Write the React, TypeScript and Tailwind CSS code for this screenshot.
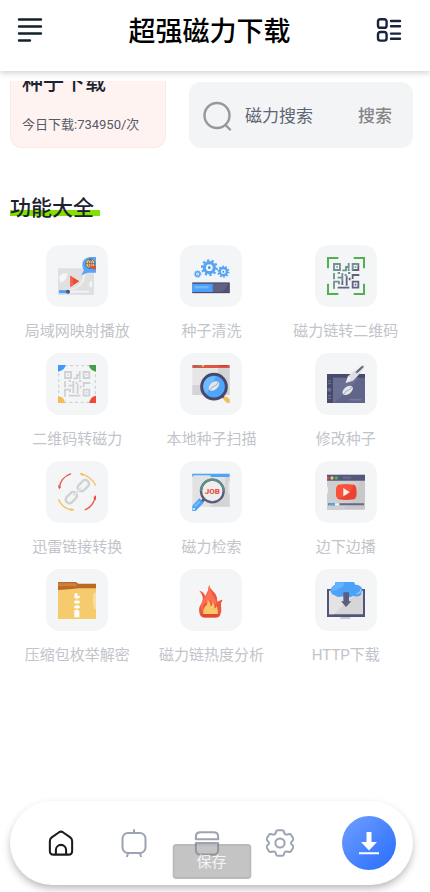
import type { ReactNode } from "react";

const FONT = "font-[family-name:Roboto,'Noto_Sans_CJK_SC',sans-serif]";

function Art({ children }: { children: ReactNode }) {
  return (
    <svg viewBox="0 0 114 114" className="h-[38px] w-[38px]" aria-hidden="true">
      {children}
    </svg>
  );
}

function Gear({ x, y, r, fill }: { x: number; y: number; r: number; fill: string }) {
  return (
    <g>
      <circle cx={x} cy={y} r={r * 0.9} fill={fill} />
      <circle
        cx={x}
        cy={y}
        r={r}
        fill="none"
        stroke={fill}
        strokeWidth={r * 0.3}
        pathLength={20}
        strokeDasharray="1 1"
      />
      <circle cx={x} cy={y} r={r * 0.46} fill="#f3f5f7" />
      <circle cx={x} cy={y} r={r * 0.18} fill="#4b86c9" />
    </g>
  );
}

function QrModules({ color }: { color: string }) {
  return (
    <g fill="none" stroke={color} strokeWidth="5.5">
      <path d="M21 21h18v18H21zM77 21h17v18H77zM77 74h17v18H77z" />
      <path d="M28 30h5M83 30h5M83 83h5" strokeWidth="5" />
      <path d="M65 18v12h-8v10H46M65 34v8" />
      <path d="M21 48v19M32 48h7M32 62h14M46 48v36M59 56v30M53 54h6M21 95V74h17M36 74v8M32 92h35" />
      <path d="M63 48h7M77 66V54h20M68 62v8" />
    </g>
  );
}

function Seed({ x, y }: { x: number; y: number }) {
  return (
    <g transform={`translate(${x} ${y}) rotate(-38)`}>
      <ellipse rx="18" ry="11" fill="#e4e6e9" />
      <path d="M-16 2Q-7-3 2 1T16-2" fill="none" stroke="#8d96a9" strokeWidth="2" />
    </g>
  );
}

function LanArt() {
  return (
    <Art>
      <path d="M0 34h108v80H0z" fill="#e1e0e0" />
      <path d="M4 62q0-12 24-14-2 24-18 28-6-2-6-14zM94 80q2-8 8-8v18q-8 2-8-10z" fill="#f6f6f6" />
      <path d="M26 98Q72 94 76 48h8q-2 40-42 52z" fill="#eeeeee" />
      <path d="M37 56v34l27-17z" fill="#e94b35" />
      <path d="M37 56v34l8-5V61z" fill="#f5634c" />
      <path d="M34 104h59" stroke="#f4f4f4" strokeWidth="5" />
      <path d="M3 104h26" stroke="#4ba0f5" strokeWidth="9" />
      <circle cx="30" cy="104" r="6" fill="#505478" />
      <path d="M114 0H96Q73 3 73 24q0 8 5 15l-8 16 19-8h25z" fill="#56a7fb" />
      <circle cx="97" cy="20" r="14" fill="#f7cd7b" stroke="#604f54" strokeWidth="2.5" />
      <path d="M97 6v28M83 20h28M97 6q-13 14 0 28M97 6q13 14 0 28" fill="none" stroke="#604f54" strokeWidth="2" />
      <path d="M99 27h15v9l-8 2z" fill="#e94b35" />
    </Art>
  );
}

function CleanArt() {
  return (
    <Art>
      <Gear x={52} y={32} r={22} fill="#54a4f7" />
      <Gear x={17} y={51} r={10} fill="#54a4f7" />
      <Gear x={94} y={44} r={16} fill="#54a4f7" />
      <path d="M1 77h112v31H1z" fill="#606282" />
      <path d="M113 80v25H84q18-3 22-25z" fill="#50526f" />
      <path d="M1 80h61v25H1z" fill="#4da1fb" />
      <path d="M8 87h42v7H8z" fill="#72b9fc" />
      <path d="M1 78h112M1 107h112" stroke="#454767" strokeWidth="3" />
    </Art>
  );
}

function ToQrArt() {
  return (
    <Art>
      <defs>
        <linearGradient id="qr-ink" gradientUnits="userSpaceOnUse" x1="20" y1="20" x2="95" y2="95">
          <stop offset=".5" stopColor="#71928e" />
          <stop offset=".54" stopColor="#61637f" />
        </linearGradient>
      </defs>
      <path
        d="M3 34V3h31M80 3h31v31M111 80v31H80M34 111H3V80"
        fill="none"
        stroke="#4fb24b"
        strokeWidth="6"
      />
      <QrModules color="url(#qr-ink)" />
    </Art>
  );
}

function FromQrArt() {
  return (
    <Art>
      <path d="M2 2h110v110H2z" fill="none" stroke="#d3d4d5" strokeWidth="4" strokeDasharray="9 8" />
      <path d="M0 0h23Q19 17 0 20z" fill="#3f99f6" />
      <path d="M114 0H93q3 17 21 20z" fill="#43a047" />
      <path d="M0 114V94q19 1 21 20z" fill="#f4bb57" />
      <path d="M114 114V92q-17 3-21 22z" fill="#ef4935" />
      <QrModules color="#d1d1d1" />
    </Art>
  );
}

function ScanArt() {
  return (
    <Art>
      <path d="M1 0h112v90H1z" fill="#e7e6e6" />
      <path d="M78 9h35v81H1V60h20Q80 60 78 9z" fill="#d5d3d4" />
      <path d="M1 0h112v9H1z" fill="#df5543" />
      <path d="M82 1h24v3H82z" fill="#b53b35" />
      <circle cx="12" cy="1" r="4" fill="#5876a8" />
      <circle cx="22" cy="1" r="4" fill="#54a154" />
      <circle cx="33" cy="1" r="4" fill="#f9cc65" />
      <path d="M87 90l8 8" stroke="#53556f" strokeWidth="8" />
      <path d="M93 102q4-10 11-7l9 8v11h-8z" fill="#f6bd57" />
      <circle cx="66" cy="65" r="37" fill="#50a5f8" stroke="#46496c" strokeWidth="9" />
      <path d="M66 34q-29 0-32 30 1 13 10 22L72 35z" fill="#6fbaff" />
      <Seed x={66} y={63} />
    </Art>
  );
}

function EditArt() {
  return (
    <Art>
      <path d="M0 27h114v87H0z" fill="#62658a" />
      <path d="M0 27h114v11H18v76H0z" fill="#484b6c" />
      <path d="M18 38h80l-76 76h-4z" fill="#6c6f94" />
      <path d="M3 48h9M3 56h9M3 92h9M3 100h9" stroke="#777a9b" strokeWidth="3" />
      <circle cx="7" cy="74" r="6" fill="#6c6f91" />
      <path d="M68 104h35" stroke="#777a9e" strokeWidth="5" />
      <path d="M56 54l7-20q16-17 48-34l3 4Q95 33 77 48z" fill="#dedfe2" />
      <path d="M56 54l8-18 8 4z" fill="#f7f7f7" />
      <path d="M87 24L108 4" stroke="#626681" strokeWidth="6" />
      <path d="M87 22l5 5" stroke="#d8dae0" strokeWidth="3" />
      <Seed x={62} y={76} />
    </Art>
  );
}

function ConvertArt() {
  return (
    <Art>
      <g fill="none" strokeWidth="4">
        <path d="M39 2Q7 14 4 45" stroke="#ee5845" />
        <path d="M66 2q33 7 47 36" stroke="#f7c160" />
        <path d="M112 68q-3 31-32 43" stroke="#ee5845" />
        <path d="M1 78q12 29 43 34" stroke="#f7c160" />
      </g>
      <path d="M0 35l3 14 6-6zM114 68l-8 6 8 8z" fill="#e74c37" />
      <path d="M65 1l12 2-2 7zM50 112l-10-7-4 7z" fill="#f6b94f" />
      <g fill="none" stroke="#d0d1d3" strokeWidth="7">
        <rect x="-19" y="-11" width="38" height="22" rx="10" transform="translate(76 38) rotate(-45)" />
        <rect x="-19" y="-11" width="38" height="22" rx="10" transform="translate(40 74) rotate(-45)" />
      </g>
      <path d="M48 66l20-20" stroke="#e4e4e5" strokeWidth="7" strokeLinecap="round" />
    </Art>
  );
}

function SearchJobArt() {
  return (
    <Art>
      <path d="M1 2h112v99H1z" fill="#e3e2e2" />
      <path d="M113 24q-9 6-4 38h4v39H50q49-15 50-89h13z" fill="#d5d4d5" />
      <path d="M1 2h112v10H58l-5-5H6l-5 6z" fill="#4ea3fa" />
      <path d="M37 78l-9 9" stroke="#545a78" strokeWidth="9" />
      <path d="M1 98l21-22 13 13-24 25H1z" fill="#4ba1f6" />
      <path d="M8 101l15-15" stroke="#7fc1ff" strokeWidth="5" />
      <circle cx="6" cy="108" r="3" fill="#f5f9ff" />
      <circle cx="61" cy="54" r="34" fill="#efeeee" stroke="#5a5c7c" strokeWidth="7" />
      <path d="M27 54a34 34 0 0 1 68 0" fill="none" stroke="#628c89" strokeWidth="7" />
      <text x="61" y="63" textAnchor="middle" fontSize="24" fontWeight="900" fill="#ed5142">
        JOB
      </text>
    </Art>
  );
}

function PlayerArt() {
  return (
    <Art>
      <path d="M0 5h114v105H0z" fill="#c9c8c8" />
      <path d="M0 23h97q-5 58-53 87H0z" fill="#d0cfcf" />
      <path d="M0 5h114v18H0z" fill="#55587a" />
      <path d="M48 14h25" stroke="#6b6e90" strokeWidth="6" />
      <circle cx="1" cy="15" r="5" fill="#ef4e38" />
      <circle cx="15" cy="15" r="5" fill="#f5c46a" />
      <circle cx="28" cy="15" r="5" fill="#57ae51" />
      <path d="M0 38q7 14 0 25z" fill="#f0f0f0" />
      <path d="M35 35q23-3 46 0 8 2 8 22t-8 22q-23 4-46 0-8-2-8-22t8-22z" fill="#e94333" />
      <path d="M35 36q22-3 43 0-5 34-46 40-5-3-5-19t8-21z" fill="#fc503a" />
      <path d="M49 45v25l19-12z" fill="#f5f5f5" />
      <path d="M3 94h108" stroke="#65688a" strokeWidth="6" />
      <path d="M5 94h22" stroke="#55a7f9" strokeWidth="6" />
      <path d="M24 94h13" stroke="#f6f6f6" strokeWidth="7" />
    </Art>
  );
}

function ZipArt() {
  return (
    <Art>
      <path d="M0 3h54l7 5h53v22H0z" fill="#bc6926" />
      <path d="M2 11h50" stroke="#cc823e" strokeWidth="9" strokeLinecap="round" />
      <path d="M0 27q50-3 62-5h52v92H0z" fill="#f6cb6e" />
      <path d="M114 35h-5q-4 3-4 22t4 27h5z" fill="#fbdda0" />
      <path
        d="M50 37h8v7h7v8h-7v7h7v8h-7v7h7v8h-7v4l6 4v19H49V87h7v-5h-7v-8h7v-7h-7v-8h7v-7h-7z"
        fill="#fff"
      />
    </Art>
  );
}

function HeatArt() {
  return (
    <Art>
      <path
        d="M52 8q-2 10 8 19 12 11 15 23-1 8 2 12 5-5 15-6-6 8-5 19 3 18-3 28-2 7-13 7H39q-13 0-16-12-5-13 2-25 9-11 7-25-2-10-10-19 14 4 18 17 11-18 12-38z"
        fill="#ee5841"
      />
      <path d="M51 12q-3 31-15 40-10 14-9 27 1 11 8 14-8-16 6-30 7 6 14-7 3 12 10 16 4-7 9-2-2-14-10-26Q55 32 51 12z" fill="#ff6f54" />
      <path d="M34 100q-2-19 10-27 3-5 3-17 9 8 9 21 6-5 6-14 7 8 6 20 5-3 6-9 5 18 3 26z" fill="#f8c868" />
      <path d="M28 99h55q-1 9-10 9H37q-8 0-9-9z" fill="#e64734" />
    </Art>
  );
}

function HttpArt() {
  return (
    <Art>
      <path d="M0 24h114v84H0z" fill="#50567a" />
      <path d="M6 29h102v71H6z" fill="#d6d5d7" />
      <path d="M6 29h90L20 100H6z" fill="#e4e3e4" />
      <path d="M42 108h28v6H39z" fill="#c9c9c9" />
      <path
        d="M25 3h54q5 2 6 8 15 0 21 12 0 9-3 11 1 11-11 12-8 1-13-2-18 10-32 2-15 5-24-3-13-4-12-16 0-9 13-16z"
        fill="#4ba2f6"
      />
      <path d="M28 4h25q-1 15-18 19-9 8-23 7-1-10 12-16z" fill="#63b3ff" />
      <path d="M88 38q13 0 14-14" fill="none" stroke="#91cbff" strokeWidth="4" />
      <path d="M49 34h17v27h7L57 78 42 61h7z" fill="#5a5e80" />
    </Art>
  );
}

const tools = [
  { label: "局域网映射播放", art: <LanArt /> },
  { label: "种子清洗", art: <CleanArt /> },
  { label: "磁力链转二维码", art: <ToQrArt /> },
  { label: "二维码转磁力", art: <FromQrArt /> },
  { label: "本地种子扫描", art: <ScanArt /> },
  { label: "修改种子", art: <EditArt /> },
  { label: "迅雷链接转换", art: <ConvertArt /> },
  { label: "磁力检索", art: <SearchJobArt /> },
  { label: "边下边播", art: <PlayerArt /> },
  { label: "压缩包枚举解密", art: <ZipArt /> },
  { label: "磁力链热度分析", art: <HeatArt /> },
  { label: "HTTP下载", art: <HttpArt /> },
];

function Header() {
  return (
    <header className="flex h-[71px] items-start justify-between bg-white pt-4 pr-[27px] pl-4 shadow-[0_2px_6px_rgba(0,0,0,0.18)]">
      <button type="button" aria-label="菜单" className="text-[#13212a]">
        <svg viewBox="0 0 28 28" className="h-7 w-7" fill="none" stroke="currentColor" strokeWidth="2.4" strokeLinecap="round">
          <path d="M3 3.5h22M3 10.5h22M3 17.5h22M3 24.5h11" />
        </svg>
      </button>
      <h1 className="text-[27px] leading-8 font-medium text-black">超强磁力下载</h1>
      <button type="button" aria-label="列表" className="text-[#17233f]">
        <svg viewBox="0 0 28 28" className="h-7 w-7" fill="none" stroke="currentColor" strokeWidth="2.4" strokeLinecap="round">
          <rect x="3" y="3.2" width="8.6" height="8.6" rx="2.4" />
          <rect x="3" y="16" width="8.6" height="8.6" rx="2.4" />
          <path d="M16 5h9M16 10.2h9M16 17.6h9M16 22.8h9" />
        </svg>
      </button>
    </header>
  );
}

function BottomNav() {
  return (
    <nav className="relative mr-[17px] mb-[7px] ml-[10px] flex h-[84px] items-center rounded-full bg-white pr-[17px] pl-[14px] shadow-[0_4px_8px_-1px_rgba(0,0,0,0.3)]">
      <div className="grid flex-1 grid-cols-4 justify-items-center text-[#9ca3b3]">
        <button type="button" aria-label="首页" className="text-[#1b1b1b]">
          <svg viewBox="0 0 28 28" className="h-[26px] w-[26px]" fill="none" stroke="currentColor" strokeWidth="2.2" strokeLinejoin="round">
            <path d="M12 2.4q2-1.300 4 0L24 8q2 1.500 2 4v10.500q0 4-4 4H6q-4 0-4-4V12q0-2.500 2-4z" />
            <path d="M8.500 26.500V21.500a5.500 5.500 0 0 1 11 0v5" />
          </svg>
        </button>
        <button type="button" aria-label="影视">
          <svg viewBox="0 0 28 28" className="h-7 w-7" fill="none" stroke="currentColor" strokeWidth="2" strokeLinecap="round">
            <rect x="2.500" y="4" width="23" height="20" rx="5.500" />
            <path d="M14 1v3M8 24.500l-1 3M20 24.500l1 3" />
          </svg>
        </button>
        <button type="button" aria-label="文件">
          <svg viewBox="0 0 28 28" className="h-[26px] w-[26px]" fill="none" stroke="currentColor" strokeWidth="2.2" strokeLinejoin="round">
            <path d="M2 10V7q0-4.500 5-4.500h14q5 0 5 4.500v3zM2 14h24v7.500q0 5-5 5H7q-5 0-5-5z" />
          </svg>
        </button>
        <button type="button" aria-label="设置">
          <svg viewBox="0 0 28 28" className="h-7 w-7" fill="none" stroke="currentColor" strokeWidth="2" strokeLinejoin="round">
            <path d="M11.500 1.200h5q1.300 0 1.500 1.800.5 3.500 4.300 2.300 2-.8 2.900.7l1.900 3.200q.8 1.500-.6 2.500-3.100 2.300 0 4.600 1.400 1 .6 2.500L25.200 22q-.9 1.500-2.900.7-3.800-1.200-4.300 2.300-.2 1.800-1.500 1.800h-5q-1.300 0-1.500-1.800-.5-3.500-4.300-2.300-2 .8-2.900-.7L.900 18.800q-.8-1.500.6-2.500 3.100-2.300 0-4.600-1.400-1-.6-2.500L2.800 6q.9-1.500 2.900-.7 3.800 1.200 4.300-2.300.2-1.800 1.500-1.800z" />
            <circle cx="14" cy="14" r="4.600" />
          </svg>
        </button>
      </div>
      <button
        type="button"
        aria-label="下载"
        className="ml-[26px] flex h-[54px] w-[54px] items-center justify-center rounded-full bg-linear-to-br from-[#6f9eff] to-[#246bfd] text-white"
      >
        <svg viewBox="0 0 24 24" className="h-6 w-6" fill="currentColor">
          <path d="M9.500 1h5v10H20l-8 8.500L4 11h5.500zM2 21.200h20v2H2z" />
        </svg>
      </button>
      <button
        type="button"
        className="absolute bottom-[6px] left-1/2 h-[35px] w-[79px] -translate-x-1/2 rounded border-2 border-black/5 bg-[#8a8a8a]/50 text-[15px] leading-6 text-white/80"
      >
        保存
      </button>
    </nav>
  );
}

export default function App() {
  return (
    <div className={`flex min-h-screen flex-col bg-white ${FONT}`}>
      <Header />
      <main className="mt-[10px] mr-[17px] mb-8 ml-[10px]">
        <div className="flex items-end gap-[23px]">
          <section className="flex h-[67px] w-[156px] flex-none flex-col justify-end overflow-hidden rounded-b-xl border border-t-0 border-[#fae9e6] bg-[#fef3f1] px-[11px] pb-3">
            <h2 className="flex-none text-[21px] leading-8 font-medium text-[#1d2330]">种子下载</h2>
            <p className="mt-[17px] flex-none text-[13px] leading-5 whitespace-nowrap text-[#535a69]">
              今日下载:734950/次
            </p>
          </section>
          <form
            className="flex h-[66px] min-w-0 flex-1 items-center rounded-xl bg-[#f3f4f6] pt-[2px] pr-[21px] pl-[13px]"
            onSubmit={(e) => e.preventDefault()}
          >
            <svg viewBox="0 0 30 30" className="h-[30px] w-[30px] flex-none" fill="none" stroke="#97979f" strokeWidth="2.4" strokeLinecap="round">
              <circle cx="15" cy="14.500" r="12.500" />
              <path d="M23.500 24l4.500 4.500" />
            </svg>
            <input
              type="text"
              aria-label="磁力搜索"
              placeholder="磁力搜索"
              className="ml-[13px] min-w-0 flex-1 bg-transparent text-[17px] leading-6 outline-none placeholder:text-[#5d6573]"
            />
            <button type="submit" className="flex-none text-[17px] leading-6 font-medium text-[#858585]">
              搜索
            </button>
          </form>
        </div>

        <h2 className="mt-[46px] w-[90px] bg-[linear-gradient(#84e003,#84e003)] bg-[length:100%_6px] bg-[position:0_16px] bg-no-repeat text-[21px] leading-7 font-medium text-[#1c2230]">
          功能大全
        </h2>

        <div className="mt-[23px] grid grid-cols-3 gap-y-[10px]">
          {tools.map((tool) => (
            <button key={tool.label} type="button" className="flex flex-col items-center">
              <span className="flex h-[62px] w-[62px] items-center justify-center rounded-[14px] bg-[#f3f5f7]">
                {tool.art}
              </span>
              <span className="mt-3 text-[15px] leading-6 whitespace-nowrap text-[#c1c4ca]">
                {tool.label}
              </span>
            </button>
          ))}
        </div>
      </main>
      <div className="mt-auto">
        <BottomNav />
      </div>
    </div>
  );
}
